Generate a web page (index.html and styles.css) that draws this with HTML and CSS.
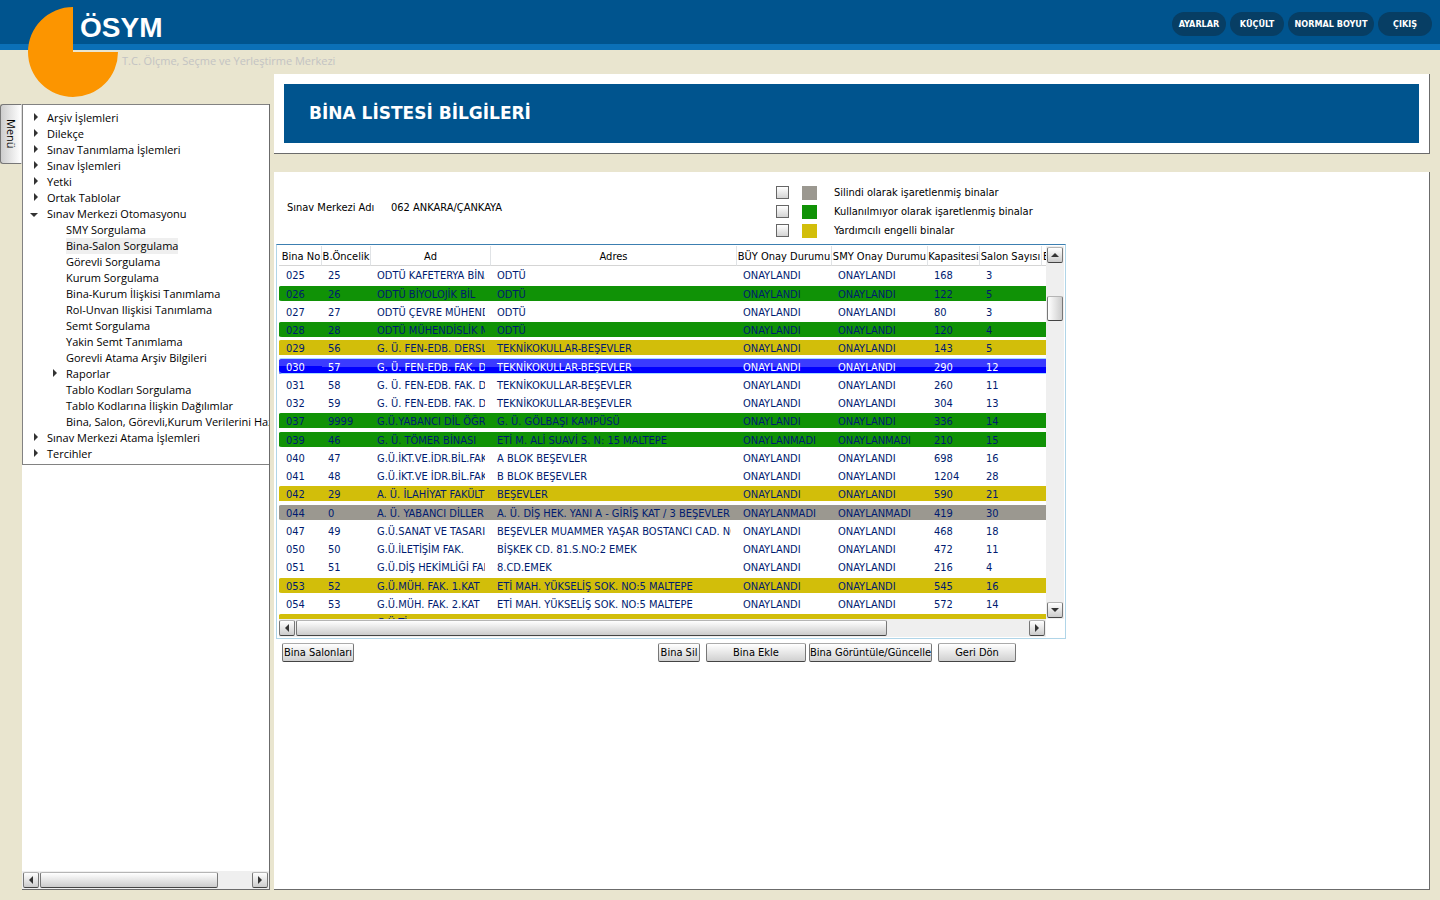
FILE: index.html
```html
<!DOCTYPE html>
<html lang="tr">
<head>
<meta charset="utf-8">
<title>ÖSYM - Bina Listesi Bilgileri</title>
<link rel="stylesheet" href="styles.css">
</head>
<body>
<header class="topbar">
  <svg class="logo" viewBox="0 0 90 90" aria-hidden="true"><path d="M45 0A45 45 0 1 0 90 45H45Z" fill="#fc9500"/></svg>
  <div class="brand">ÖSYM</div>
  <nav class="actions">
    <button type="button">AYARLAR</button>
    <button type="button">KÜÇÜLT</button>
    <button type="button" class="wide">NORMAL BOYUT</button>
    <button type="button">ÇIKIŞ</button>
  </nav>
</header>
<p class="subtitle">T.C. Ölçme, Seçme ve Yerleştirme Merkezi</p>
<div class="layout">
  <button type="button" class="tab">Menü</button>
  <aside class="sidebar">
    <ul class="tree">
      <li class="closed">Arşiv İşlemleri</li>
      <li class="closed">Dilekçe</li>
      <li class="closed">Sınav Tanımlama İşlemleri</li>
      <li class="closed">Sınav İşlemleri</li>
      <li class="closed">Yetki</li>
      <li class="closed">Ortak Tablolar</li>
      <li class="open">Sınav Merkezi Otomasyonu
        <ul>
          <li>SMY Sorgulama</li>
          <li><span class="current">Bina-Salon Sorgulama</span></li>
          <li>Görevli Sorgulama</li>
          <li>Kurum Sorgulama</li>
          <li>Bina-Kurum İlişkisi Tanımlama</li>
          <li>Rol-Unvan Ilişkisi Tanımlama</li>
          <li>Semt Sorgulama</li>
          <li>Yakin Semt Tanımlama</li>
          <li>Gorevli Atama Arşiv Bilgileri</li>
          <li class="closed">Raporlar</li>
          <li>Tablo Kodları Sorgulama</li>
          <li>Tablo Kodlarına İlişkin Dağılımlar</li>
          <li>Bina, Salon, Görevli,Kurum Verilerini Hazırlama</li>
        </ul>
      </li>
      <li class="closed">Sınav Merkezi Atama İşlemleri</li>
      <li class="closed">Tercihler</li>
    </ul>
    <div class="hbar">
      <button type="button" class="arrow left" aria-label="Sola kaydır"></button>
      <div class="track"><div class="thumb menu-thumb"></div></div>
      <button type="button" class="arrow right" aria-label="Sağa kaydır"></button>
    </div>
  </aside>
  <main class="main">
    <section class="panel title-panel"><h1>BİNA LİSTESİ BİLGİLERİ</h1></section>
    <section class="panel content">
      <div class="filters">
        <dl class="center-name"><dt>Sınav Merkezi Adı</dt><dd>062 ANKARA/ÇANKAYA</dd></dl>
        <div class="legend">
          <label><input type="checkbox"><span class="swatch gray"></span>Silindi olarak işaretlenmiş binalar</label>
          <label><input type="checkbox"><span class="swatch green"></span>Kullanılmıyor olarak işaretlenmiş binalar</label>
          <label><input type="checkbox"><span class="swatch yellow"></span>Yardımcılı engelli binalar</label>
        </div>
      </div>
      <div class="grid">
        <div class="viewport">
          <table>
            <colgroup><col class="c-no"><col class="c-pri"><col class="c-name"><col class="c-addr"><col class="c-buy"><col class="c-smy"><col class="c-cap"><col class="c-hall"><col class="c-last"></colgroup>
            <thead><tr><th>Bina No</th><th>B.Öncelik</th><th>Ad</th><th>Adres</th><th>BÜY Onay Durumu</th><th>SMY Onay Durumu</th><th>Kapasitesi</th><th>Salon Sayısı</th><th class="cut">Engelli</th></tr></thead>
            <tbody>
              <tr><td>025</td><td>25</td><td><div>ODTÜ KAFETERYA BİNASI</div></td><td>ODTÜ</td><td>ONAYLANDI</td><td>ONAYLANDI</td><td>168</td><td>3</td><td></td></tr>
              <tr class="green"><td>026</td><td>26</td><td><div>ODTÜ BİYOLOJİK BİL</div></td><td>ODTÜ</td><td>ONAYLANDI</td><td>ONAYLANDI</td><td>122</td><td>5</td><td></td></tr>
              <tr><td>027</td><td>27</td><td><div>ODTÜ ÇEVRE MÜHENDİSLİĞİ</div></td><td>ODTÜ</td><td>ONAYLANDI</td><td>ONAYLANDI</td><td>80</td><td>3</td><td></td></tr>
              <tr class="green"><td>028</td><td>28</td><td><div>ODTÜ MÜHENDİSLİK MERKEZİ</div></td><td>ODTÜ</td><td>ONAYLANDI</td><td>ONAYLANDI</td><td>120</td><td>4</td><td></td></tr>
              <tr class="yellow"><td>029</td><td>56</td><td><div>G. Ü. FEN-EDB. DERSLİK</div></td><td>TEKNİKOKULLAR-BEŞEVLER</td><td>ONAYLANDI</td><td>ONAYLANDI</td><td>143</td><td>5</td><td></td></tr>
              <tr class="selected"><td>030</td><td>57</td><td><div>G. Ü. FEN-EDB. FAK. DERS</div></td><td>TEKNİKOKULLAR-BEŞEVLER</td><td>ONAYLANDI</td><td>ONAYLANDI</td><td>290</td><td>12</td><td></td></tr>
              <tr><td>031</td><td>58</td><td><div>G. Ü. FEN-EDB. FAK. DERS</div></td><td>TEKNİKOKULLAR-BEŞEVLER</td><td>ONAYLANDI</td><td>ONAYLANDI</td><td>260</td><td>11</td><td></td></tr>
              <tr><td>032</td><td>59</td><td><div>G. Ü. FEN-EDB. FAK. DERS</div></td><td>TEKNİKOKULLAR-BEŞEVLER</td><td>ONAYLANDI</td><td>ONAYLANDI</td><td>304</td><td>13</td><td></td></tr>
              <tr class="green"><td>037</td><td>9999</td><td><div>G.Ü.YABANCI DİL ÖĞRETİM</div></td><td>G. Ü. GÖLBAŞI KAMPÜSÜ</td><td>ONAYLANDI</td><td>ONAYLANDI</td><td>336</td><td>14</td><td></td></tr>
              <tr class="green"><td>039</td><td>46</td><td><div>G. Ü. TÖMER BİNASI</div></td><td>ETİ M. ALİ SUAVİ S. N: 15 MALTEPE</td><td>ONAYLANMADI</td><td>ONAYLANMADI</td><td>210</td><td>15</td><td></td></tr>
              <tr><td>040</td><td>47</td><td><div>G.Ü.İKT.VE.İDR.BİL.FAK.</div></td><td>A BLOK BEŞEVLER</td><td>ONAYLANDI</td><td>ONAYLANDI</td><td>698</td><td>16</td><td></td></tr>
              <tr><td>041</td><td>48</td><td><div>G.Ü.İKT.VE İDR.BİL.FAK.</div></td><td>B BLOK BEŞEVLER</td><td>ONAYLANDI</td><td>ONAYLANDI</td><td>1204</td><td>28</td><td></td></tr>
              <tr class="yellow"><td>042</td><td>29</td><td><div>A. Ü. İLAHİYAT FAKÜLTESİ</div></td><td>BEŞEVLER</td><td>ONAYLANDI</td><td>ONAYLANDI</td><td>590</td><td>21</td><td></td></tr>
              <tr class="gray"><td>044</td><td>0</td><td><div>A. Ü. YABANCI DİLLER</div></td><td><div>A. Ü. DİŞ HEK. YANI A - GİRİŞ KAT / 3 BEŞEVLER</div></td><td>ONAYLANMADI</td><td>ONAYLANMADI</td><td>419</td><td>30</td><td></td></tr>
              <tr><td>047</td><td>49</td><td><div>G.Ü.SANAT VE TASARIM</div></td><td><div>BEŞEVLER MUAMMER YAŞAR BOSTANCI CAD. NO</div></td><td>ONAYLANDI</td><td>ONAYLANDI</td><td>468</td><td>18</td><td></td></tr>
              <tr><td>050</td><td>50</td><td><div>G.Ü.İLETİŞİM FAK.</div></td><td>BİŞKEK CD. 81.S.NO:2 EMEK</td><td>ONAYLANDI</td><td>ONAYLANDI</td><td>472</td><td>11</td><td></td></tr>
              <tr><td>051</td><td>51</td><td><div>G.Ü.DİŞ HEKİMLİĞİ FAK.</div></td><td>8.CD.EMEK</td><td>ONAYLANDI</td><td>ONAYLANDI</td><td>216</td><td>4</td><td></td></tr>
              <tr class="yellow"><td>053</td><td>52</td><td><div>G.Ü.MÜH. FAK. 1.KAT</div></td><td>ETİ MAH. YÜKSELİŞ SOK. NO:5 MALTEPE</td><td>ONAYLANDI</td><td>ONAYLANDI</td><td>545</td><td>16</td><td></td></tr>
              <tr><td>054</td><td>53</td><td><div>G.Ü.MÜH. FAK. 2.KAT</div></td><td>ETİ MAH. YÜKSELİŞ SOK. NO:5 MALTEPE</td><td>ONAYLANDI</td><td>ONAYLANDI</td><td>572</td><td>14</td><td></td></tr>
              <tr class="yellow"><td></td><td></td><td><div>G.Ü.Tİ</div></td><td></td><td></td><td></td><td></td><td></td><td></td></tr>
            </tbody>
          </table>
        </div>
        <div class="vbar">
          <button type="button" class="arrow up" aria-label="Yukarı kaydır"></button>
          <div class="track"><div class="thumb grid-vthumb"></div></div>
          <button type="button" class="arrow down" aria-label="Aşağı kaydır"></button>
        </div>
        <div class="hbar">
          <button type="button" class="arrow left" aria-label="Sola kaydır"></button>
          <div class="track"><div class="thumb grid-hthumb"></div></div>
          <button type="button" class="arrow right" aria-label="Sağa kaydır"></button>
        </div>
      </div>
      <div class="commands">
        <button type="button" class="cmd halls">Bina Salonları</button>
        <button type="button" class="cmd delete">Bina Sil</button>
        <button type="button" class="cmd add">Bina Ekle</button>
        <button type="button" class="cmd update">Bina Görüntüle/Güncelle</button>
        <button type="button" class="cmd back">Geri Dön</button>
      </div>
    </section>
  </main>
</div>
</body>
</html>
```
FILE: styles.css
```css
* { box-sizing: border-box; }
body {
  margin: 0;
  min-height: 100vh;
  display: flex;
  flex-direction: column;
  background: #e9e5cf;
  color: #000;
  font: 11px/16px "DejaVu Sans Condensed", "DejaVu Sans", sans-serif;
}
button { font: inherit; color: inherit; padding: 0; margin: 0; white-space: nowrap; }

.topbar {
  position: relative;
  display: flex;
  justify-content: space-between;
  height: 50px;
  padding: 12px 8px 0 80px;
  background: #00548e;
  border-bottom: 6px solid #0b70b7;
}
.logo { position: absolute; left: 28px; top: 7px; width: 90px; height: 90px; }
.brand { color: #fff; font: bold 28px/32px "Liberation Sans", Arial, sans-serif; }
.actions { display: flex; gap: 4px; }
.actions button {
  width: 54px;
  height: 24px;
  border: 0;
  border-radius: 12px;
  background: #073e64;
  color: #fff;
  font-size: 9px;
  font-weight: bold;
}
.actions .wide { width: 86px; }
.subtitle {
  height: 24px;
  margin: 0;
  padding: 2px 0 0 122px;
  color: #c3c3c3;
  font: 11px/18px "Open Sans", "Noto Sans", sans-serif;
}

.layout { flex: 1; display: flex; padding: 0 10px 10px 0; }
.tab {
  width: 22px;
  height: 60px;
  margin-top: 30px;
  writing-mode: vertical-rl;
  border: 1px solid #777;
  border-right-color: #ddd;
  border-radius: 3px 0 0 3px;
  background: linear-gradient(90deg, #cdcdcd, #fff);
  font: 11px/18px "Open Sans", "Noto Sans", sans-serif;
}
.sidebar {
  flex: 0 0 248px;
  margin: 30px 4px 0 0;
  display: flex;
  flex-direction: column;
  justify-content: space-between;
  background: #fff;
  border-right: 1px solid #6b6b6b;
  border-bottom: 1px solid #6b6b6b;
  overflow: hidden;
}
.tree, .tree ul { list-style: none; margin: 0; padding: 0; }
.tree {
  padding: 5px 0 2px 24px;
  border: 1px solid #828282;
  border-right: 0;
  font: 11px/16px "Open Sans", "Noto Sans", sans-serif;
  white-space: nowrap;
}
.tree ul { padding-left: 19px; }
.tree li { position: relative; }
.tree .closed::before, .tree .open::before {
  content: "";
  position: absolute;
  top: 3px;
  left: -13px;
  border: 4px solid transparent;
  border-right-width: 0;
  border-left-color: #333;
}
.tree .open::before {
  top: 7px;
  left: -17px;
  border: 4px solid transparent;
  border-bottom-width: 0;
  border-top-color: #333;
}
.current { display: inline-block; background: #efefef; }

/* scroll bars */
.hbar, .vbar { display: flex; background: #efefef; gap: 1px; }
.hbar { height: 18px; padding: 1px; }
.vbar { flex-direction: column; width: 18px; padding: 1px; }
.grid .hbar { padding-left: 0; }
.track { flex: 1; }
.thumb, .arrow {
  border: 1px solid #777;
  border-top-color: #b5b5b5;
  border-bottom-color: #444;
  border-radius: 2px;
  background: linear-gradient(#fff, #ccc);
}
.hbar .thumb { height: 16px; }
.vbar .thumb { width: 16px; background: linear-gradient(90deg, #fff, #ccc); }
.menu-thumb { width: 178px; }
.arrow { flex: 0 0 16px; width: 16px; height: 16px; display: grid; place-items: center; }
.arrow::before { content: ""; border: 4px solid transparent; }
.left::before { border-left-width: 0; border-right-color: #333; }
.right::before { border-right-width: 0; border-left-color: #333; }
.up::before { border-top-width: 0; border-bottom-color: #333; }
.down::before { border-bottom-width: 0; border-top-color: #333; }

.main { flex: 1; min-width: 0; display: flex; flex-direction: column; gap: 18px; }
.panel { background: #fff; border-right: 1px solid #6b6b6b; border-bottom: 1px solid #6b6b6b; }
.title-panel { padding: 10px; }
h1 {
  margin: 0;
  padding: 0 25px;
  background: #00548e;
  color: #fff;
  font: bold 17px/59px "DejaVu Sans", sans-serif;
}
.content { flex: 1; padding: 11px 2px 10px; }
.filters { display: flex; width: 790px; height: 61px; }
.center-name { display: flex; width: 500px; margin: 0; padding: 17px 0 0 11px; }
.center-name dt { width: 104px; }
.center-name dd { margin: 0; }
.legend { display: grid; grid-auto-rows: 19px; align-content: start; }
.legend label { display: flex; align-items: center; white-space: nowrap; }
.legend input {
  appearance: none;
  width: 13px;
  height: 13px;
  margin: 0 13px 0 0;
  border: 1px solid #666;
  background: linear-gradient(#fff, #d4d4d4);
}
.swatch { width: 15px; height: 14px; margin-right: 17px; }
.gray { --fill: #9b9890; }
.green { --fill: #109206; }
.yellow { --fill: #d2be0a; }
.swatch { background: var(--fill); }

.grid {
  display: grid;
  grid-template-columns: minmax(0, 1fr) 18px;
  width: 790px;
  max-width: 100%;
  padding: 1px 1px 1px 2px;
  border: 1px solid #b0d5e8;
  border-top-color: #3c7fb1;
}
.viewport { height: 373px; overflow: hidden; }
table { width: 844px; table-layout: fixed; border-spacing: 0; }
.c-no { width: 43px; }
.c-pri { width: 49px; }
.c-name { width: 120px; }
.c-addr { width: 246px; }
.c-buy { width: 95px; }
.c-smy { width: 96px; }
.c-cap { width: 52px; }
.c-hall { width: 62px; }
.c-last { width: 81px; }
th, td { overflow: hidden; white-space: nowrap; }
th {
  height: 20px;
  padding: 2px 0 0;
  border-right: 1px solid #e0e3e6;
  border-bottom: 1px solid #d5d5d5;
  font-weight: normal;
  line-height: 17px;
}
th:first-child { padding-left: 2px; }
.cut { text-align: left; padding-left: 1px; }
td {
  height: 18px;
  padding: 2px 6px 0;
  border: solid transparent;
  border-width: 1px 0 2px;
  background: var(--fill) padding-box;
  color: #001b70;
  line-height: 13px;
}
/* keeps long text clear of the next column */
td div { overflow: hidden; }
td:first-child { padding-left: 7px; border-radius: 2px 0 0 3px; }
tr:nth-child(4n+1) td { height: 19px; border-bottom-width: 3px; }
.selected td {
  --fill: linear-gradient(#3b3bff 50%, #00f 50%);
  color: #fff;
  border-top-color: #a6dcff;
  box-shadow: inset 0 -1px #a6dcff;
}
.grid-vthumb { height: 25px; margin-top: 32px; }
.grid-hthumb { width: 591px; }

.commands { display: flex; padding: 4px 6px; }
.cmd {
  height: 19px;
  padding-top: 1px;
  border: 1px solid #777;
  border-top-color: #aaa;
  border-bottom-color: #444;
  border-radius: 2px;
  background: linear-gradient(#fff, #d0d0d0);
}
.halls { width: 72px; margin-right: 304px; }
.delete { width: 42px; margin-right: 6px; }
.add { width: 100px; margin-right: 3px; }
.update { width: 123px; margin-right: 6px; }
.back { width: 78px; }
```
